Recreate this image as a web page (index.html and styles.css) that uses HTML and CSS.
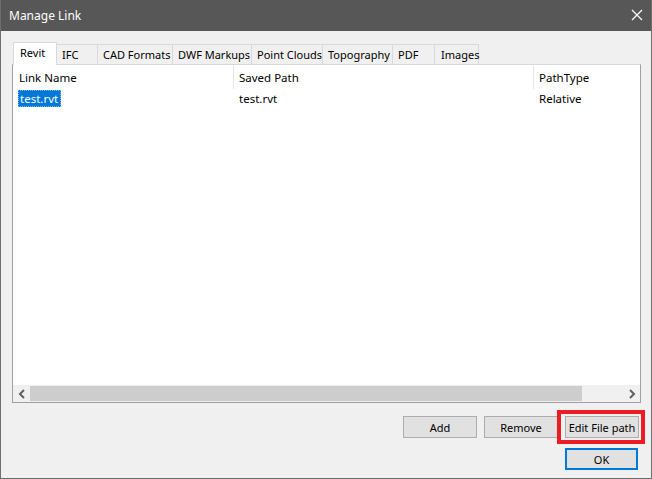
FILE: index.html
```html
<!DOCTYPE html>
<html>
<head>
<meta charset="utf-8">
<title>Manage Link</title>
<link rel="stylesheet" href="styles.css">
</head>
<body>
<div class="window">
  <div class="titlebar">
    <span class="title">Manage Link</span>
    <svg class="close" width="12" height="12" viewBox="0 0 12 12"><path d="M1 1 L11 11 M11 1 L1 11" stroke="#ffffff" stroke-width="1.2" fill="none"/></svg>
  </div>
  <div class="dialog">
    <div class="tabs">
      <div class="tab selected w-revit">Revit</div>
      <div class="tab w-ifc">IFC</div>
      <div class="tab w-cad">CAD Formats</div>
      <div class="tab w-dwf">DWF Markups</div>
      <div class="tab w-pc">Point Clouds</div>
      <div class="tab w-topo">Topography</div>
      <div class="tab w-pdf">PDF</div>
      <div class="tab last w-img">Images</div>
    </div>
    <div class="panel">
      <div class="header">
        <div class="col c1">Link Name</div>
        <div class="col c2">Saved Path</div>
        <div class="col c3">PathType</div>
      </div>
      <div class="row">
        <div class="cell c1"><span class="sel">test.rvt</span></div>
        <div class="cell c2">test.rvt</div>
        <div class="cell c3">Relative</div>
      </div>
      <div class="fill"></div>
      <div class="hscroll">
        <div class="arrow"><svg width="8" height="10" viewBox="0 0 8 10"><path d="M6 1 L2 5 L6 9" stroke="#606060" stroke-width="2" fill="none"/></svg></div>
        <div class="thumb"></div>
        <div class="track"></div>
        <div class="arrow"><svg width="8" height="10" viewBox="0 0 8 10"><path d="M2 1 L6 5 L2 9" stroke="#606060" stroke-width="2" fill="none"/></svg></div>
      </div>
    </div>
    <div class="buttons">
      <button class="btn">Add</button>
      <button class="btn">Remove</button>
      <div class="marked">
        <button class="btn">Edit File path</button>
        <div class="redbox"></div>
      </div>
    </div>
    <div class="buttons okrow">
      <button class="btn ok">OK</button>
    </div>
  </div>
</div>
</body>
</html>
```
FILE: styles.css
```css
html, body {
  margin: 0;
  padding: 0;
  background: #f0f0f0;
}
body {
  font-family: "Noto Sans", "Open Sans", sans-serif;
  font-size: 11.5px;
  color: #000;
}
.window {
  width: 652px;
  height: 479px;
  box-sizing: border-box;
  border: 1px solid #6e6e6e;
  border-top: none;
  background: #f0f0f0;
  display: flex;
  flex-direction: column;
  overflow: hidden;
}
.titlebar {
  height: 31px;
  flex: none;
  background: #575757;
  color: #ffffff;
  display: flex;
  align-items: center;
  justify-content: space-between;
  padding: 0 8px 0 8px;
  margin: 0 -1px;
}
.title {
  font-size: 12px;
  padding-bottom: 1px;
  padding-left: 1px;
}
.close {
  margin-right: 1px;
  margin-top: -1px;
}
.dialog {
  flex: 1;
  display: flex;
  flex-direction: column;
  padding: 11px 12px 0 11px;
}
.tabs {
  display: flex;
  align-items: flex-end;
  height: 22px;
  margin-left: 1px;
  position: relative;
  z-index: 1;
  font-size: 11px;
}
.tab {
  box-sizing: border-box;
  height: 20px;
  border: 1px solid #d9d9d9;
  border-right: none;
  border-bottom: none;
  background: #f0f0f0;
  padding-left: 5px;
  line-height: 19px;
  white-space: nowrap;
}
.tab.last {
  border-right: 1px solid #d9d9d9;
}
.tab.selected {
  height: 23px;
  margin-bottom: -1px;
  background: #ffffff;
  border-right: 1px solid #d9d9d9;
  padding-left: 6px;
  line-height: 20px;
}
.w-revit { width: 44px; }
.w-ifc { width: 40px; border-left: none; }
.w-cad { width: 75px; }
.w-dwf { width: 79px; }
.w-pc { width: 71px; }
.w-topo { width: 70px; }
.w-pdf { width: 42px; }
.w-img { width: 45px; padding-left: 6px; }

.panel {
  width: 629px;
  height: 339px;
  box-sizing: border-box;
  border: 1px solid #a0a0a0;
  border-top-color: #d9d9d9;
  background: #ffffff;
  display: flex;
  flex-direction: column;
}
.header {
  display: flex;
  height: 25px;
  flex: none;
}
.col {
  box-sizing: border-box;
  padding-left: 5px;
  line-height: 23px;
  border-right: 1px solid #e5e5e5;
  margin-top: 1px;
  margin-bottom: 1px;
}
.c1 { width: 221px; padding-left: 6px; }
.c2 { width: 300px; }
.c3 { flex: 1; border-right: none; }
.row {
  display: flex;
  height: 18px;
  flex: none;
}
.cell {
  box-sizing: border-box;
  padding-left: 5px;
  line-height: 17px;
}
.row .c1 { padding-left: 5px; }
.sel {
  display: inline-block;
  background: #0078d7;
  color: #ffffff;
  padding: 0 3px 0 2px;
  outline: 1px dotted #7fb4e8;
  outline-offset: -1px;
  line-height: 17px;
}
.fill { flex: 1; }
.hscroll {
  display: flex;
  height: 17px;
  flex: none;
  background: #f0f0f0;
}
.arrow {
  width: 17px;
  display: flex;
  align-items: center;
  justify-content: center;
}
.thumb {
  width: 552px;
  margin: 1px 0;
  background: #cdcdcd;
}
.track { flex: 1; }

.buttons {
  display: flex;
  justify-content: flex-end;
  gap: 7px;
  margin-top: 13px;
}
.okrow {
  margin-top: 10px;
  padding-right: 1px;
}
.btn {
  width: 74px;
  height: 22px;
  box-sizing: border-box;
  border: 1px solid #adadad;
  background: #e1e1e1;
  font-family: "Noto Sans", "Open Sans", sans-serif;
  font-size: 11px;
  color: #000;
  padding: 0;
  margin: 0;
  line-height: 19px;
  white-space: nowrap;
}
.btn.ok {
  width: 73px;
  border: 2px solid #0078d7;
}
.marked {
  position: relative;
  display: flex;
}
.redbox {
  position: absolute;
  left: -8px;
  right: -6px;
  top: -6px;
  bottom: -6px;
  border: 4px solid #ed1c24;
  pointer-events: none;
}
```
